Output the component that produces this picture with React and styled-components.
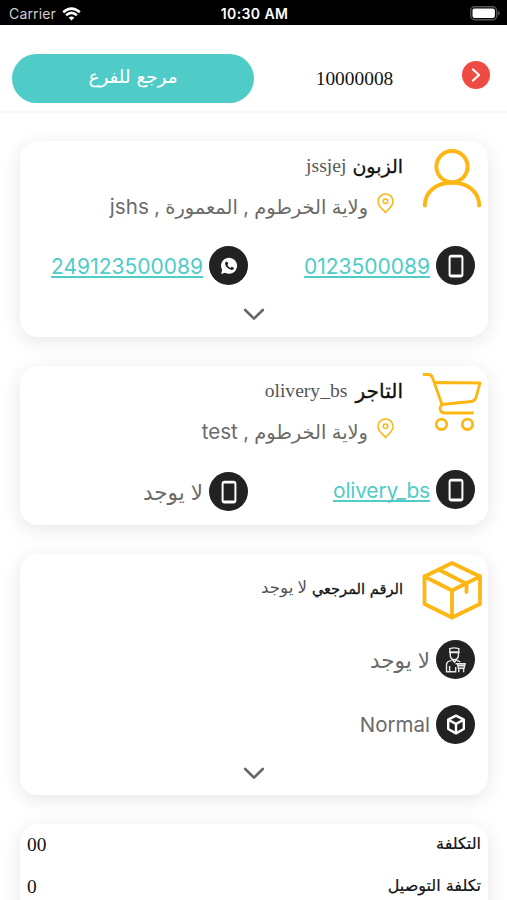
import React from 'react'
import styled, { createGlobalStyle } from 'styled-components'

const GlobalStyle = createGlobalStyle`
*{ box-sizing:border-box; }
body{
  margin:0;
  background:#fff;
  overflow:hidden;
}
`
const Screen = styled.div`
direction:rtl;
height:900px;
overflow:hidden;
background:#fff;
font-family:Inter, "DejaVu Sans", sans-serif;
color:#6b6b6b;
`
const StatusBar = styled.div`
direction:ltr;
display:grid;
grid-template-columns:1fr auto 1fr;
align-items:center;
height:25px;
padding:2px 7px 0 9px;
background:#000;
color:#e8e8e8;
font-size:14px;
`
const Carrier = styled.div`
display:flex;
align-items:center;
gap:6px;
color:#cfcfcf;
letter-spacing:0.15px;
`
const Clock = styled.div`
color:#fff;
font-weight:600;
font-size:14px;
letter-spacing:0.4px;
`
const BatteryIcon = styled.svg`
justify-self:end;
`
const Header = styled.header`
display:flex;
align-items:center;
justify-content:space-between;
height:88px;
padding:21px 17px 0 12px;
border-bottom:2px solid #f7f7f7;
`
const BackButton = styled.button`
display:flex;
align-items:center;
justify-content:center;
width:28px;
height:28px;
margin-bottom:7px;
padding:0;
border:none;
border-radius:50%;
background:#ee4b43;
`
const OrderNumber = styled.div`
margin-right:7px;
font-family:"Liberation Serif", serif;
font-size:19.4px;
color:#111;
`
const StatusButton = styled.button`
width:242px;
height:49px;
padding:0 0 4px;
border:none;
border-radius:25px;
background:#50ccc8;
color:#fff;
font-family:"DejaVu Sans", sans-serif;
font-size:18.4px;
`
const Cards = styled.main`
display:flex;
flex-direction:column;
gap:29px;
padding:28px 19px 0 20px;
`
const Card = styled.section`
height:${props => props.$height}px;
flex:none;
padding:${props => props.$top ?? 7}px 6px 0;
border-radius:18px;
background:#fff;
box-shadow:0 4px 20px rgba(0,0,0,0.1);
`
const CardTop = styled.div`
display:flex;
gap:19px;
height:78px;
`
const Title = styled.div`
display:flex;
align-items:center;
gap:${props => props.$gap || 6}px;
height:36px;
margin-top:${props => props.$top || 0}px;
color:#555;
font-family:"Liberation Serif", "DejaVu Sans", serif;
font-size:${props => props.$size || 19.6}px;
white-space:nowrap;
`
const Strong = styled.span`
color:#111;
font-family:"DejaVu Sans", sans-serif;
font-size:${props => props.$size || 19}px;
-webkit-text-stroke:0.3px #111;
`
const Place = styled.div`
display:flex;
align-items:center;
gap:9px;
height:44px;
padding-right:9px;
font-size:19.4px;
white-space:nowrap;

svg{
  margin-bottom:6px;
}
`
const Latin = styled.span`
font-size:20.6px;
`
const Contacts = styled.div`
display:flex;
height:39px;
margin-top:${props => props.$top || 0}px;
padding-right:7px;
`
const Contact = styled.div`
display:flex;
align-items:center;
gap:6px;
width:227px;
height:39px;
flex:none;
margin-top:${props => props.$top || 0}px;
font-size:${props => props.$size || 21.5}px;
white-space:nowrap;
`
const Round = styled.div`
display:flex;
align-items:center;
justify-content:center;
width:39px;
height:39px;
flex:none;
border-radius:50%;
background:#222;
color:#fff;
`
const PhoneLink = styled.a`
padding-top:1px;
color:#50ccc8;
font-size:21px;
letter-spacing:${props => props.$spacing || 0}px;
text-decoration:underline;
text-decoration-thickness:1.5px;
text-underline-offset:2px;
text-decoration-skip-ink:none;
`
const Toggle = styled.div`
display:flex;
justify-content:center;
margin-top:${props => props.$top}px;
`
const PriceRow = styled.div`
display:flex;
align-items:center;
justify-content:space-between;
height:42px;
padding:0 1px;
color:#111;
font-family:"DejaVu Sans", sans-serif;
font-size:16px;
-webkit-text-stroke:0.2px #111;

&:first-child{
  margin-top:-2px;
}
`
const Price = styled.span`
padding-top:3px;
font-family:"Liberation Serif", serif;
font-size:19.4px;
-webkit-text-stroke:0;
`

function Wifi() {
  return (
    <svg width="19" height="14" viewBox="0 0 19 14" fill="none" stroke="#fff" strokeWidth="2.5">
      <path d="M1.2 5.2Q9.5 -2 17.8 5.2" />
      <path d="M4.1 8.2Q9.5 3.6 14.9 8.2" />
      <path d="M9.5 13.6L6.6 10.6Q9.5 8.3 12.4 10.6Z" fill="#fff" stroke="none" />
    </svg>
  )
}

function Battery() {
  return (
    <BatteryIcon width="30" height="15" viewBox="0 0 30 15">
      <rect x="0.7" y="0.7" width="26" height="13" rx="4" fill="none" stroke="#555" strokeWidth="1.4" />
      <rect x="2.5" y="2.5" width="22.4" height="9.6" rx="2" fill="#fff" />
      <path d="M28 5v4.6q1.7-.6 1.7-2.3T28 5z" fill="#555" />
    </BatteryIcon>
  )
}

function Person() {
  return (
    <svg width="60" height="60" viewBox="0 0 60 60" fill="none" stroke="#fcb714" strokeWidth="4" strokeLinecap="round">
      <circle cx="30" cy="18.6" r="15.6" />
      <path d="M2.8 57.4C3 43 15 34.8 30 34.8S57 43 57.2 57.4" />
    </svg>
  )
}

function Cart() {
  return (
    <svg width="60" height="60" viewBox="0 0 60 60" fill="none" stroke="#fcb714" strokeWidth="2.8" strokeLinecap="round" strokeLinejoin="round">
      <path d="M2 1.5H6.5Q9.5 1.5 10.6 5L20 31.5L49 28.5Q53 28 54 24.5L58 10L13.5 9.5" />
      <path d="M20 31.5C16.5 35 18 40 23 40H50.5" />
      <circle cx="19.5" cy="51.3" r="5.2" />
      <circle cx="45.5" cy="51.3" r="5.2" />
    </svg>
  )
}

function Package() {
  return (
    <svg width="60" height="60" viewBox="0 0 60 60" fill="none" stroke="#fcb714" strokeWidth="3.8" strokeLinecap="round" strokeLinejoin="round">
      <path d="M30 2L58 15.5V43L30 56.5L2.5 43V15.5Z" />
      <path d="M2.5 15.5L30 29.5L58 15.5M30 29.5V56.5M17 8.8L44.5 22.8V31" />
    </svg>
  )
}

function Pin() {
  return (
    <svg width="17" height="21" viewBox="0 0 17 21" fill="none" stroke="#fcb714" strokeWidth="1.5">
      <path d="M8.5 19.5C6.7 16.5 1 14 1 8.4a7.5 7.5 0 0 1 15 0C16 14 10.3 16.5 8.5 19.5Z" />
      <circle cx="8.5" cy="8.3" r="2.3" />
    </svg>
  )
}

function Phone() {
  return (
    <Round>
      <svg width="16" height="24" viewBox="0 0 16 24" fill="none" stroke="#fff">
        <rect x="1.6" y="1.8" width="12.8" height="20.6" rx="2" strokeWidth="2" />
        <path d="M2 2.6h12M2 21.6h12" strokeWidth="2" />
      </svg>
    </Round>
  )
}

function Whatsapp() {
  return (
    <Round>
      <svg width="18" height="18" viewBox="0 0 18 18">
        <path d="M1 17L2.2 12.9A8 8 0 1 1 5.2 15.8Z" fill="#fff" />
        <path d="M5.6 5.1q1-1.3 1.8-.2l.9 1.9-.9 1.1q1 2.2 3.1 3l1.1-1.2 2.1 1q.5.5-.2 1.5-1.5 1.5-4.4-.1-3-1.8-3.8-4.2-.5-1.6.3-2.8z" fill="#222" />
      </svg>
    </Round>
  )
}

function Seller() {
  return (
    <Round>
      <svg width="22" height="26" viewBox="0 0 22 26" fill="none" stroke="#e8e8e8" strokeWidth="1.4">
        <path d="M4.8 1.6Q9 .2 13.8 1.6V5H4.8Z" />
        <path d="M4 5.6h10.6M5.3 6v3q.8 3.8 4 3.8T13.4 9V6M7 12.4l2.4 2.8L12 12.4" />
        <path d="M6.5 13.6Q1.5 14 1.5 18v6.7h9.2V20M4.6 19v5.5M12 13.6q2.2.2 3.2 1.6" />
        <path d="M10.5 16.8h10.3M12.5 17l.9 4.3h5.6l1-4.3M13.8 21.3v3.9M18.6 21.3v3.9" />
        <path d="M13 18.5h6.4" strokeWidth="2" />
      </svg>
    </Round>
  )
}

function Cube() {
  return (
    <Round>
      <svg width="20" height="21" viewBox="0 0 20 21" fill="none" stroke="#fff" strokeWidth="2.4" strokeLinejoin="round">
        <path d="M10 1.6L17.8 5.6V15L10 19.4L2.2 15V5.6Z" />
        <path d="M2.2 5.8L10 9.9L17.8 5.8M10 9.9V19" />
      </svg>
    </Round>
  )
}

function Down() {
  return (
    <svg width="22" height="13" viewBox="0 0 22 13" fill="none" stroke="#666" strokeWidth="2.6" strokeLinecap="round" strokeLinejoin="round">
      <path d="M2.2 2L11 10.7L19.8 2" />
    </svg>
  )
}

export default function App() {
  return (
    <Screen>
      <GlobalStyle />
      <StatusBar>
        <Carrier>
          Carrier
          <Wifi />
        </Carrier>
        <Clock>10:30 AM</Clock>
        <Battery />
      </StatusBar>
      <Header>
        <BackButton>
          <svg width="10" height="14" viewBox="0 0 10 14" fill="none" stroke="#fff" strokeWidth="2.2" strokeLinecap="round" strokeLinejoin="round">
            <path d="M2 1.5L8 7L2 12.5" />
          </svg>
        </BackButton>
        <OrderNumber>10000008</OrderNumber>
        <StatusButton>مرجع للفرع</StatusButton>
      </Header>
      <Cards>
        <Card $height={196}>
          <CardTop>
            <Person />
            <div>
              <Title><Strong>الزبون</Strong>jssjej</Title>
              <Place><Pin /><span>ولاية الخرطوم , المعمورة , <Latin>jshs</Latin></span></Place>
            </div>
          </CardTop>
          <Contacts $top={20}>
            <Contact><Phone /><PhoneLink>0123500089</PhoneLink></Contact>
            <Contact><Whatsapp /><PhoneLink>249123500089</PhoneLink></Contact>
          </Contacts>
          <Toggle $top={23}><Down /></Toggle>
        </Card>
        <Card $height={159}>
          <CardTop>
            <Cart />
            <div>
              <Title $gap={8}><Strong $size={20.2}>التاجر</Strong>olivery_bs</Title>
              <Place><Pin /><span>ولاية الخرطوم , <Latin>test</Latin></span></Place>
            </div>
          </CardTop>
          <Contacts $top={19}>
            <Contact><Phone /><PhoneLink $spacing={-0.2}>olivery_bs</PhoneLink></Contact>
            <Contact $top={2}><Phone />لا يوجد</Contact>
          </Contacts>
        </Card>
        <Card $height={241}>
          <CardTop>
            <Package />
            <Title $top={9} $size={16.6} $gap={5}><Strong $size={14.6}>الرقم المرجعي</Strong>لا يوجد</Title>
          </CardTop>
          <Contacts $top={1}>
            <Contact><Seller />لا يوجد</Contact>
          </Contacts>
          <Contacts $top={26}>
            <Contact $size={20.5}><Cube />Normal</Contact>
          </Contacts>
          <Toggle $top={23}><Down /></Toggle>
        </Card>
        <Card $height={160} $top={0}>
          <PriceRow>التكلفة<Price>00</Price></PriceRow>
          <PriceRow>تكلفة التوصيل<Price>0</Price></PriceRow>
        </Card>
      </Cards>
    </Screen>
  )
}
